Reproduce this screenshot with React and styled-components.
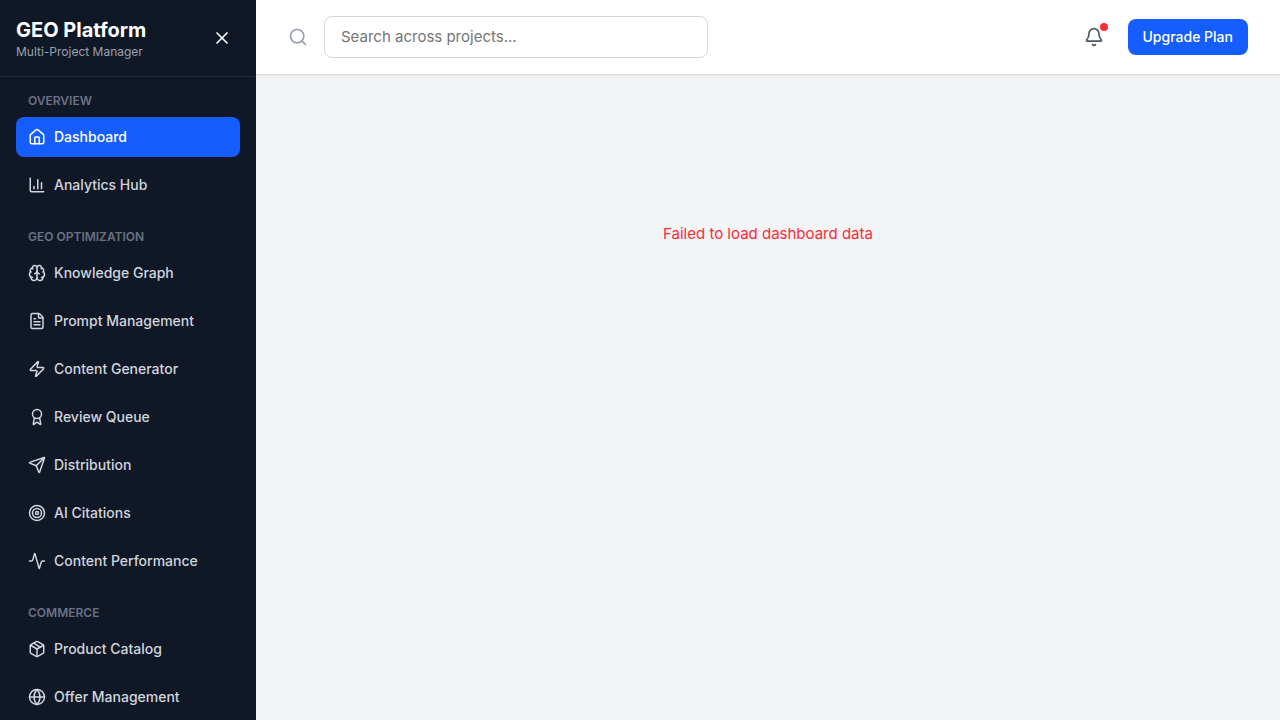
import React from "react";
import styled, { createGlobalStyle } from "styled-components";
import {
  Activity,
  Award,
  Bell,
  Brain,
  ChartColumn,
  FileText,
  Globe,
  House,
  Package,
  Search,
  Send,
  Target,
  X,
  Zap,
} from "lucide-react";

const GlobalStyle = createGlobalStyle`
  *, *::before, *::after { box-sizing: border-box; }
  body {
    margin: 0;
    font-family: Inter, "Liberation Sans", sans-serif;
    font-size: 15px;
    line-height: 24px;
    -webkit-font-smoothing: antialiased;
  }
  h1, h2, p, ul { margin: 0; padding: 0; }
  ul { list-style: none; }
  button, input { font: inherit; }
`;

const Shell = styled.div`
  display: flex;
  height: 100vh;
  background: #f3f4f6;
`;

const Sidebar = styled.aside`
  display: flex;
  flex-direction: column;
  flex: none;
  width: 256px;
  background: #101828;
  color: #ffffff;
`;

const Brand = styled.div`
  display: flex;
  align-items: center;
  justify-content: space-between;
  padding: 16px;
  border-bottom: 1px solid #1e2939;
`;

const BrandName = styled.h1`
  font-size: 20px;
  line-height: 28px;
  font-weight: 700;
`;

const BrandNote = styled.p`
  font-size: 12px;
  line-height: 16px;
  color: #99a1af;
`;

const IconButton = styled.button`
  position: relative;
  display: flex;
  padding: 8px;
  border: 0;
  border-radius: 8px;
  background: transparent;
  color: ${(p) => p.$color};
  cursor: pointer;
`;

const Nav = styled.nav`
  display: flex;
  flex-direction: column;
  flex: 1;
  gap: 24px;
  min-height: 0;
  padding: 16px;
  overflow-y: auto;
  scrollbar-width: none;
`;

const SectionTitle = styled.h2`
  margin-bottom: 8px;
  padding: 0 12px;
  font-size: 12px;
  line-height: 16px;
  font-weight: 600;
  text-transform: uppercase;
  color: #6a7282;
`;

const NavList = styled.ul`
  display: flex;
  flex-direction: column;
  gap: 8px;
`;

const NavLink = styled.a`
  display: flex;
  align-items: center;
  gap: 8px;
  padding: 10px 12px;
  border-radius: 8px;
  font-size: 14px;
  line-height: 20px;
  font-weight: 500;
  text-decoration: none;
  color: ${(p) => (p.$active ? "#ffffff" : "#d1d5dc")};
  background: ${(p) => (p.$active ? "#155dfc" : "transparent")};
`;

const Content = styled.div`
  display: flex;
  flex-direction: column;
  flex: 1;
  min-width: 0;
`;

const TopBar = styled.header`
  display: flex;
  align-items: center;
  justify-content: space-between;
  gap: 16px;
  padding: 16px 32px;
  background: #ffffff;
  box-shadow: 0 1px 3px rgba(0, 0, 0, 0.1), 0 1px 2px -1px rgba(0, 0, 0, 0.1);
`;

const SearchField = styled.label`
  display: flex;
  align-items: center;
  gap: 16px;
  color: #99a1af;
`;

const SearchInput = styled.input`
  width: 384px;
  padding: 8px 16px;
  border: 1px solid #d1d5dc;
  border-radius: 8px;
  background: #ffffff;
  color: #101828;

  &::placeholder { color: #757575; }
`;

const Actions = styled.div`
  display: flex;
  align-items: center;
  gap: 16px;
`;

const UnreadDot = styled.span`
  position: absolute;
  top: 4px;
  right: 4px;
  width: 8px;
  height: 8px;
  border-radius: 50%;
  background: #fb2c36;
`;

const UpgradeButton = styled.button`
  padding: 8px 15px;
  border: 0;
  border-radius: 8px;
  background: #155dfc;
  color: #ffffff;
  font-size: 14px;
  line-height: 20px;
  font-weight: 500;
  cursor: pointer;
`;

const Main = styled.main`
  flex: 1;
  padding: 32px;
  overflow-y: auto;
`;

const LoadError = styled.p`
  display: flex;
  align-items: center;
  justify-content: center;
  height: 256px;
  color: #fb2c36;
`;

const sections = [
  {
    title: "Overview",
    items: [
      { label: "Dashboard", icon: House, active: true },
      { label: "Analytics Hub", icon: ChartColumn },
    ],
  },
  {
    title: "GEO Optimization",
    items: [
      { label: "Knowledge Graph", icon: Brain },
      { label: "Prompt Management", icon: FileText },
      { label: "Content Generator", icon: Zap },
      { label: "Review Queue", icon: Award },
      { label: "Distribution", icon: Send },
      { label: "AI Citations", icon: Target },
      { label: "Content Performance", icon: Activity },
    ],
  },
  {
    title: "Commerce",
    items: [
      { label: "Product Catalog", icon: Package },
      { label: "Offer Management", icon: Globe },
    ],
  },
];

export default function App() {
  return (
    <>
      <GlobalStyle />
      <Shell>
        <Sidebar>
          <Brand>
            <div>
              <BrandName>GEO Platform</BrandName>
              <BrandNote>Multi-Project Manager</BrandNote>
            </div>
            <IconButton type="button" aria-label="Close sidebar" $color="#ffffff">
              <X size={20} />
            </IconButton>
          </Brand>
          <Nav>
            {sections.map(({ title, items }) => (
              <section key={title}>
                <SectionTitle>{title}</SectionTitle>
                <NavList>
                  {items.map(({ label, icon: Icon, active }) => (
                    <li key={label}>
                      <NavLink href="#" $active={active} aria-current={active ? "page" : undefined}>
                        <Icon size={18} />
                        {label}
                      </NavLink>
                    </li>
                  ))}
                </NavList>
              </section>
            ))}
          </Nav>
        </Sidebar>
        <Content>
          <TopBar>
            <SearchField>
              <Search size={20} />
              <SearchInput type="text" aria-label="Search" placeholder="Search across projects..." />
            </SearchField>
            <Actions>
              <IconButton type="button" aria-label="Notifications" $color="#4a5565">
                <Bell size={20} />
                <UnreadDot />
              </IconButton>
              <UpgradeButton type="button">Upgrade Plan</UpgradeButton>
            </Actions>
          </TopBar>
          <Main>
            <LoadError role="alert">Failed to load dashboard data</LoadError>
          </Main>
        </Content>
      </Shell>
    </>
  );
}
